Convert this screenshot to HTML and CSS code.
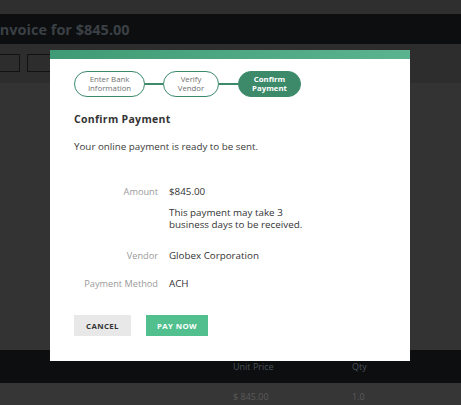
FILE: index.html
```html
<!DOCTYPE html>
<html>
<head>
<meta charset="utf-8">
<link rel="stylesheet" href="styles.css">
</head>
<body>
<div class="page">
  <div class="top-strip"></div>
  <div class="title-bar"><span class="title">Invoice for $845.00</span></div>
  <div class="toolbar">
    <div class="tool-btn tool-btn-a"></div>
    <div class="tool-btn tool-btn-b"></div>
  </div>
  <div class="content"></div>
  <div class="table-head">
    <span class="col-price">Unit Price</span>
    <span class="col-qty">Qty</span>
  </div>
  <div class="table-row">
    <span class="col-price">$ 845.00</span>
    <span class="col-qty">1.0</span>
  </div>
</div>

<div class="modal">
  <div class="modal-bar"></div>
  <div class="modal-body">
    <div class="steps">
      <div class="step step-1">Enter Bank<br>Information</div>
      <div class="connector c1"></div>
      <div class="step step-2">Verify<br>Vendor</div>
      <div class="connector c2"></div>
      <div class="step step-active">Confirm<br>Payment</div>
    </div>
    <h2 class="heading">Confirm Payment</h2>
    <p class="intro">Your online payment is ready to be sent.</p>
    <div class="details">
      <div class="label">Amount</div>
      <div class="value">$845.00
        <div class="note">This payment may take 3<br>business days to be received.</div>
      </div>
      <div class="label">Vendor</div>
      <div class="value">Globex Corporation</div>
      <div class="label">Payment Method</div>
      <div class="value">ACH</div>
    </div>
    <div class="actions">
      <button class="btn btn-cancel">CANCEL</button>
      <button class="btn btn-pay">PAY NOW</button>
    </div>
  </div>
</div>
</body>
</html>
```

FILE: styles.css
```css
html, body {
  margin: 0;
  padding: 0;
}
body {
  background: #333333;
  font-family: "Open Sans", "Liberation Sans", sans-serif;
  width: 461px;
  height: 405px;
  overflow: hidden;
  position: relative;
}
.page {
  display: flex;
  flex-direction: column;
  height: 405px;
}
.top-strip {
  height: 14px;
  background: #2f2f2f;
}
.title-bar {
  height: 30px;
  background: #0c0e10;
  display: flex;
  align-items: center;
  overflow: hidden;
}
.title {
  margin-left: -5px;
  font-weight: 700;
  font-size: 14.5px;
  color: #3b4045;
  white-space: nowrap;
}
.toolbar {
  height: 39px;
  background: #2d2d2d;
  display: flex;
  gap: 7px;
  padding-top: 10px;
  box-sizing: border-box;
}
.tool-btn {
  height: 18px;
  border: 1px solid #121212;
  box-sizing: border-box;
}
.tool-btn-a {
  width: 30px;
  margin-left: -10px;
}
.tool-btn-b {
  width: 40px;
}
.content {
  flex: 1;
  background: #333333;
}
.table-head {
  height: 33px;
  background: #0c0e10;
  display: flex;
  align-items: center;
  font-size: 9px;
  color: #4d5257;
}
.table-row {
  height: 22px;
  background: #363636;
  display: flex;
  align-items: center;
  font-size: 9px;
  color: #5a5a5a;
  padding-top: 5px;
  box-sizing: border-box;
}
.col-price {
  margin-left: 233px;
  width: 119px;
}
.col-qty {
  width: 30px;
}

.modal {
  position: absolute;
  left: 50px;
  top: 50px;
  width: 360px;
  height: 311px;
  background: #ffffff;
}
.modal-bar {
  height: 9px;
  background: linear-gradient(90deg, #3f9b75, #5cb38f);
}
.modal-body {
  padding: 12px 24px 0 24px;
}
.steps {
  display: flex;
  align-items: center;
}
.step {
  height: 26px;
  box-sizing: border-box;
  border: 1px solid #3d8a6b;
  border-radius: 13px;
  display: flex;
  align-items: center;
  justify-content: center;
  text-align: center;
  font-size: 7.8px;
  line-height: 9px;
  color: #707070;
}
.step-1 { width: 71px; }
.step-2 { width: 56px; }
.step-active {
  width: 63px;
  background: #3d8a6b;
  color: #ffffff;
  font-weight: 700;
}
.connector {
  height: 2px;
  background: #3d8a6b;
}
.c1 { width: 18px; }
.c2 { width: 19px; }
.heading {
  margin: 15px 0 0 0;
  font-size: 10.5px;
  font-weight: 700;
  letter-spacing: 0.3px;
  color: #333333;
  line-height: 14px;
}
.intro {
  margin: 15px 0 0 0;
  font-size: 9.8px;
  line-height: 12px;
  color: #3a3a3a;
}
.details {
  margin-top: 33px;
  display: grid;
  grid-template-columns: 84px 1fr;
  column-gap: 11px;
  row-gap: 16px;
  align-items: start;
}
.label {
  text-align: right;
  font-size: 9.2px;
  line-height: 12px;
  color: #9a9a9a;
  white-space: nowrap;
}
.value {
  font-size: 9.8px;
  line-height: 12px;
  color: #333333;
}
.note {
  margin-top: 9px;
  margin-bottom: 3px;
  line-height: 12px;
}
.actions {
  margin-top: 25px;
  display: flex;
  gap: 15px;
}
.btn {
  height: 21px;
  border: none;
  font-family: inherit;
  font-weight: 700;
  font-size: 7.8px;
  letter-spacing: 0.4px;
  padding: 0;
}
.btn-cancel {
  width: 57px;
  background: #e8e8e8;
  color: #333333;
}
.btn-pay {
  width: 62px;
  background: #51c08e;
  color: #ffffff;
}
```
